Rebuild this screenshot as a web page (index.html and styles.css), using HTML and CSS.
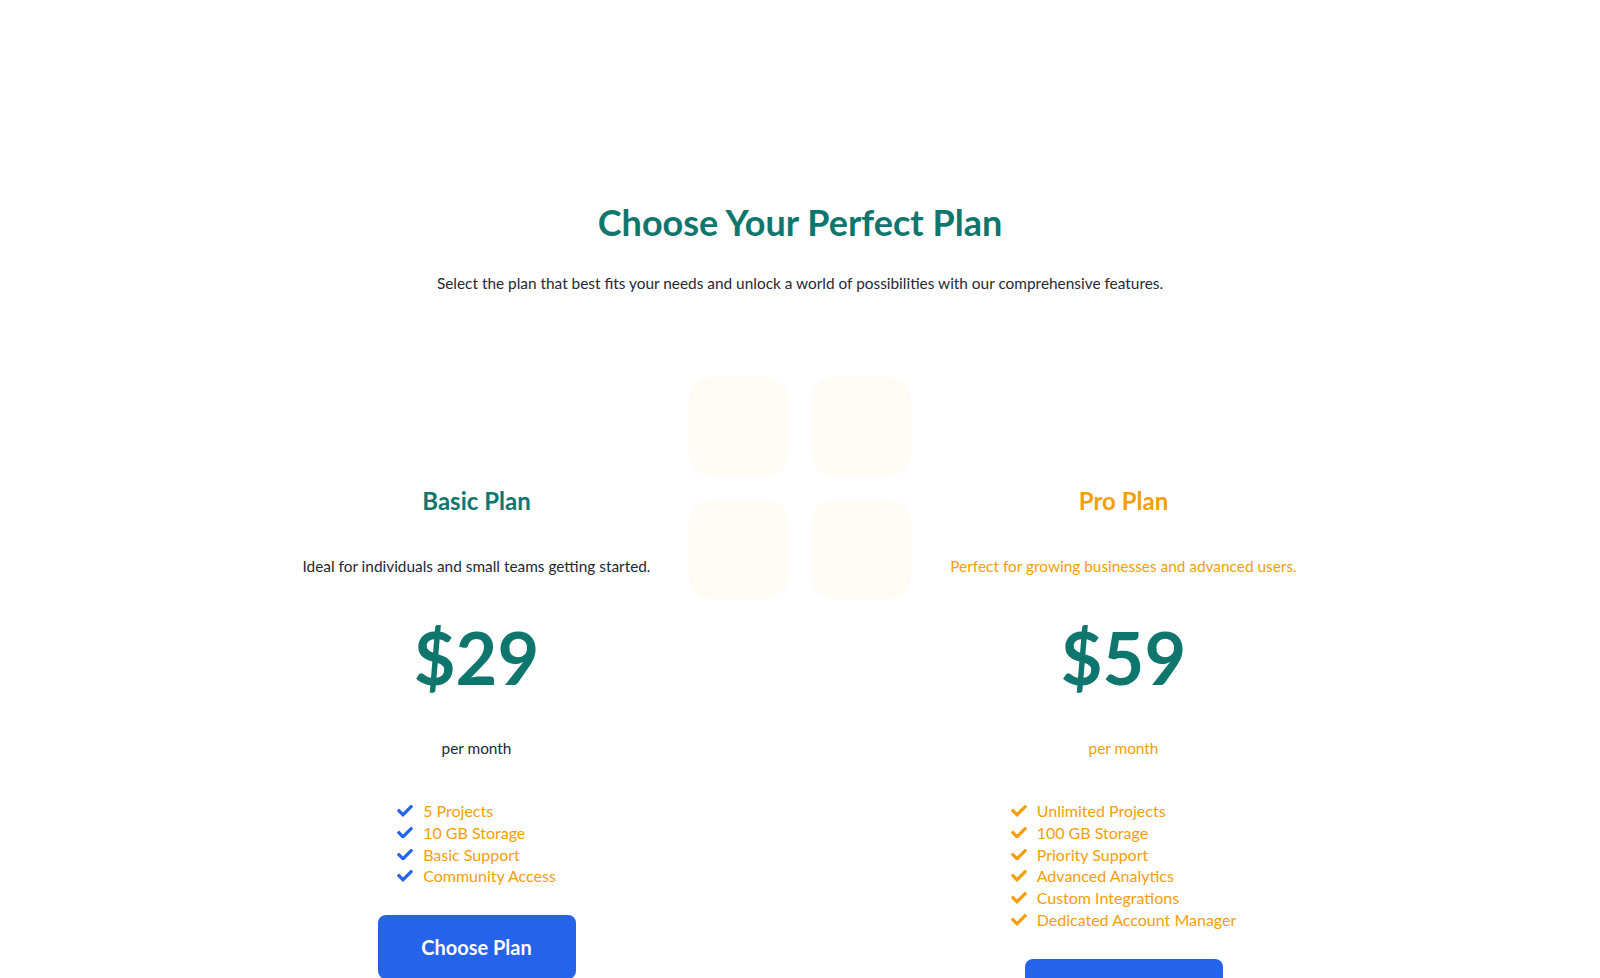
FILE: index.html
```html
<!DOCTYPE html>
<html lang="en">
<head>
<meta charset="utf-8">
<title>Choose Your Perfect Plan</title>
<link rel="stylesheet" href="styles.css">
</head>
<body>
<section class="pricing">
  <h1 class="title">Choose Your Perfect Plan</h1>
  <p class="subtitle">Select the plan that best fits your needs and unlock a world of possibilities with our comprehensive features.</p>
  <div class="plans">
    <div class="card basic">
      <h2 class="plan-name">Basic Plan</h2>
      <p class="plan-desc">Ideal for individuals and small teams getting started.</p>
      <div class="price">$29</div>
      <p class="period">per month</p>
      <ul class="features">
        <li><svg class="check" viewBox="0 0 512 370"><path d="M173.9 368.4l-166.4-166.4c-10-10-10-26.2 0-36.2l36.2-36.2c10-10 26.2-10 36.2 0L192 241.7 432.1 1.6c10-10 26.2-10 36.2 0l36.2 36.2c10 10 10 26.2 0 36.2l-294.4 294.4c-10 10-26.2 10-36.2 0z"/></svg>5 Projects</li>
        <li><svg class="check" viewBox="0 0 512 370"><path d="M173.9 368.4l-166.4-166.4c-10-10-10-26.2 0-36.2l36.2-36.2c10-10 26.2-10 36.2 0L192 241.7 432.1 1.6c10-10 26.2-10 36.2 0l36.2 36.2c10 10 10 26.2 0 36.2l-294.4 294.4c-10 10-26.2 10-36.2 0z"/></svg>10 GB Storage</li>
        <li><svg class="check" viewBox="0 0 512 370"><path d="M173.9 368.4l-166.4-166.4c-10-10-10-26.2 0-36.2l36.2-36.2c10-10 26.2-10 36.2 0L192 241.7 432.1 1.6c10-10 26.2-10 36.2 0l36.2 36.2c10 10 10 26.2 0 36.2l-294.4 294.4c-10 10-26.2 10-36.2 0z"/></svg>Basic Support</li>
        <li><svg class="check" viewBox="0 0 512 370"><path d="M173.9 368.4l-166.4-166.4c-10-10-10-26.2 0-36.2l36.2-36.2c10-10 26.2-10 36.2 0L192 241.7 432.1 1.6c10-10 26.2-10 36.2 0l36.2 36.2c10 10 10 26.2 0 36.2l-294.4 294.4c-10 10-26.2 10-36.2 0z"/></svg>Community Access</li>
      </ul>
      <button class="btn">Choose Plan</button>
    </div>
    <div class="deco" aria-hidden="true">
      <span></span><span></span><span></span><span></span>
    </div>
    <div class="card pro">
      <h2 class="plan-name">Pro Plan</h2>
      <p class="plan-desc">Perfect for growing businesses and advanced users.</p>
      <div class="price">$59</div>
      <p class="period">per month</p>
      <ul class="features">
        <li><svg class="check" viewBox="0 0 512 370"><path d="M173.9 368.4l-166.4-166.4c-10-10-10-26.2 0-36.2l36.2-36.2c10-10 26.2-10 36.2 0L192 241.7 432.1 1.6c10-10 26.2-10 36.2 0l36.2 36.2c10 10 10 26.2 0 36.2l-294.4 294.4c-10 10-26.2 10-36.2 0z"/></svg>Unlimited Projects</li>
        <li><svg class="check" viewBox="0 0 512 370"><path d="M173.9 368.4l-166.4-166.4c-10-10-10-26.2 0-36.2l36.2-36.2c10-10 26.2-10 36.2 0L192 241.7 432.1 1.6c10-10 26.2-10 36.2 0l36.2 36.2c10 10 10 26.2 0 36.2l-294.4 294.4c-10 10-26.2 10-36.2 0z"/></svg>100 GB Storage</li>
        <li><svg class="check" viewBox="0 0 512 370"><path d="M173.9 368.4l-166.4-166.4c-10-10-10-26.2 0-36.2l36.2-36.2c10-10 26.2-10 36.2 0L192 241.7 432.1 1.6c10-10 26.2-10 36.2 0l36.2 36.2c10 10 10 26.2 0 36.2l-294.4 294.4c-10 10-26.2 10-36.2 0z"/></svg>Priority Support</li>
        <li><svg class="check" viewBox="0 0 512 370"><path d="M173.9 368.4l-166.4-166.4c-10-10-10-26.2 0-36.2l36.2-36.2c10-10 26.2-10 36.2 0L192 241.7 432.1 1.6c10-10 26.2-10 36.2 0l36.2 36.2c10 10 10 26.2 0 36.2l-294.4 294.4c-10 10-26.2 10-36.2 0z"/></svg>Advanced Analytics</li>
        <li><svg class="check" viewBox="0 0 512 370"><path d="M173.9 368.4l-166.4-166.4c-10-10-10-26.2 0-36.2l36.2-36.2c10-10 26.2-10 36.2 0L192 241.7 432.1 1.6c10-10 26.2-10 36.2 0l36.2 36.2c10 10 10 26.2 0 36.2l-294.4 294.4c-10 10-26.2 10-36.2 0z"/></svg>Custom Integrations</li>
        <li><svg class="check" viewBox="0 0 512 370"><path d="M173.9 368.4l-166.4-166.4c-10-10-10-26.2 0-36.2l36.2-36.2c10-10 26.2-10 36.2 0L192 241.7 432.1 1.6c10-10 26.2-10 36.2 0l36.2 36.2c10 10 10 26.2 0 36.2l-294.4 294.4c-10 10-26.2 10-36.2 0z"/></svg>Dedicated Account Manager</li>
      </ul>
      <button class="btn">Choose Plan</button>
    </div>
  </div>
</section>
</body>
</html>
```

FILE: styles.css
```css
* { box-sizing: border-box; }
html, body {
  margin: 0;
  padding: 0;
  background: #ffffff;
}
body {
  font-family: "Lato", "Noto Sans", sans-serif;
  color: #1f2937;
}
.pricing {
  padding-top: 200px;
  display: flex;
  flex-direction: column;
  align-items: center;
}
.title {
  margin: 0;
  font-size: 36px;
  line-height: 44px;
  font-weight: 700;
  color: #0f766e;
}
.subtitle {
  margin: 27px 0 0;
  font-size: 15.4px;
  line-height: 24px;
}
.plans {
  margin-top: 82px;
  display: grid;
  grid-template-columns: 425px 222px 425px;
  align-items: start;
}
.deco {
  display: grid;
  grid-template-columns: 100px 100px;
  grid-auto-rows: 100px;
  gap: 22px;
}
.deco span {
  background: #fefcf4;
  border-radius: 24px;
}
.card {
  padding: 108px 0 0;
  display: flex;
  flex-direction: column;
  align-items: center;
  text-align: center;
}
.plan-name {
  margin: 0;
  font-size: 24px;
  line-height: 32px;
  font-weight: 700;
}
.basic .plan-name { color: #0f766e; }
.pro .plan-name { color: #f59e0b; }
.plan-desc {
  margin: 37px 0 0;
  font-size: 15.4px;
  line-height: 24px;
  white-space: nowrap;
}
.pro .plan-desc { color: #f59e0b; }
.price {
  margin-top: 31px;
  font-size: 72px;
  line-height: 96px;
  font-weight: 700;
  color: #0f766e;
}
.period {
  margin: 31px 0 0;
  font-size: 15.4px;
  line-height: 24px;
}
.pro .period { color: #f59e0b; }
.features {
  list-style: none;
  margin: 40px 0 0;
  padding: 0;
  text-align: left;
  color: #f59e0b;
  font-size: 16px;
  line-height: 21.8px;
}
.features li {
  display: flex;
  align-items: center;
  gap: 10px;
}
.check {
  width: 16px;
  height: 11.6px;
  flex: none;
}
.basic .check { fill: #2563eb; }
.pro .check { fill: #f59e0b; }
.btn {
  margin-top: 28px;
  width: 198px;
  height: 64px;
  border: 0;
  border-radius: 8px;
  background: #2563eb;
  color: #ffffff;
  font-family: inherit;
  font-size: 20px;
  font-weight: 700;
}
```
